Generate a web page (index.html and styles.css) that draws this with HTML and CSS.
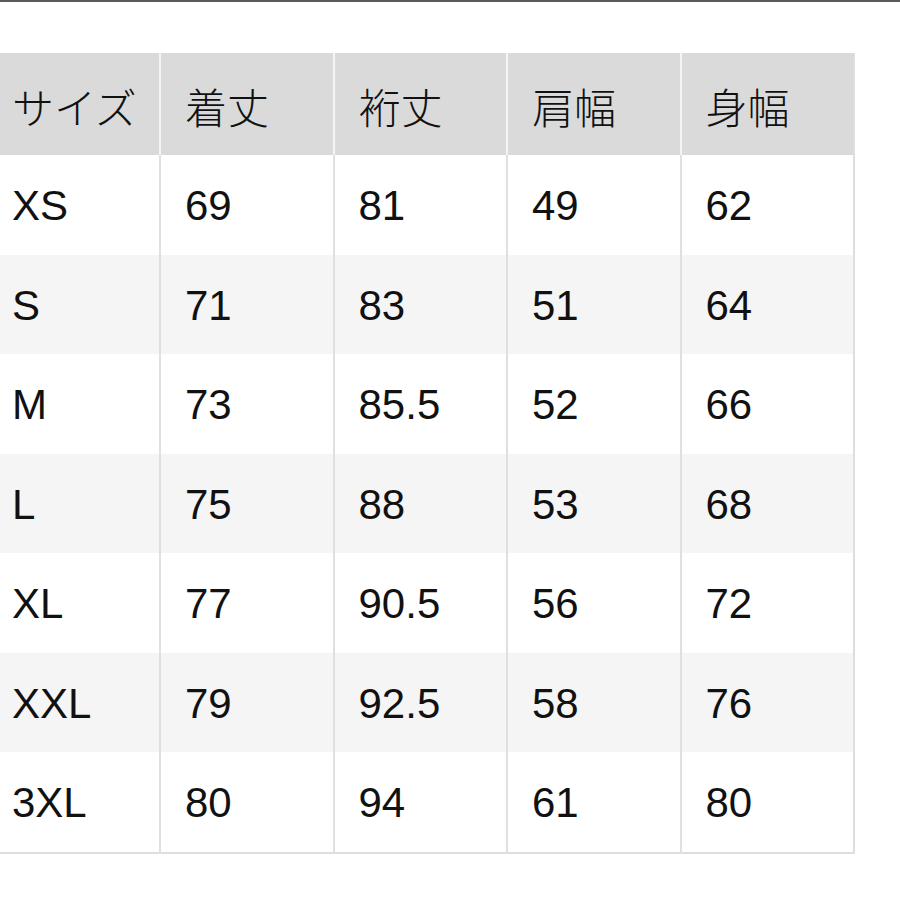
FILE: index.html
```html
<!DOCTYPE html>
<html lang="ja">
<head>
<meta charset="utf-8">
<link rel="stylesheet" href="styles.css">
</head>
<body>
<div class="topline"></div>
<table class="size-table">
  <colgroup>
    <col class="c0"><col class="c"><col class="c"><col class="c"><col class="c">
  </colgroup>
  <thead>
    <tr><th>サイズ</th><th>着丈</th><th>裄丈</th><th>肩幅</th><th>身幅</th></tr>
  </thead>
  <tbody>
    <tr><td>XS</td><td>69</td><td>81</td><td>49</td><td>62</td></tr>
    <tr><td>S</td><td>71</td><td>83</td><td>51</td><td>64</td></tr>
    <tr><td>M</td><td>73</td><td>85.5</td><td>52</td><td>66</td></tr>
    <tr><td>L</td><td>75</td><td>88</td><td>53</td><td>68</td></tr>
    <tr><td>XL</td><td>77</td><td>90.5</td><td>56</td><td>72</td></tr>
    <tr><td>XXL</td><td>79</td><td>92.5</td><td>58</td><td>76</td></tr>
    <tr><td>3XL</td><td>80</td><td>94</td><td>61</td><td>80</td></tr>
  </tbody>
</table>
</body>
</html>
```

FILE: styles.css
```css
html, body {
  margin: 0;
  padding: 0;
  background: #ffffff;
}

body {
  font-family: "Liberation Sans", "Noto Sans CJK JP", sans-serif;
  color: #111111;
}

.topline {
  height: 2px;
  background: #595959;
}

.size-table {
  margin-top: 51px;
  border-collapse: collapse;
  table-layout: fixed;
  width: 854px;
  border-right: 2px solid #dedede;
  border-bottom: 2px solid #dedede;
}

.c0 { width: 160px; }
.c { width: 173.5px; }

.size-table th,
.size-table td {
  text-align: left;
  font-size: 42px;
  font-weight: 400;
  padding: 3px 0 0 24px;
  border-left: 2px solid #e0e0e0;
  white-space: nowrap;
}

.size-table th:first-child,
.size-table td:first-child {
  padding-left: 12px;
  border-left: none;
}

.size-table th {
  height: 99px;
  background: #dadada;
  font-family: "Noto Sans CJK JP", "Liberation Sans", sans-serif;
  font-weight: 300;
  border-left: 2px solid #f4f4f4;
}

.size-table th:first-child {
  border-left: none;
}

.size-table td {
  height: 96.5px;
}

.size-table tbody tr:nth-child(even) {
  background: #f5f5f5;
}
```
